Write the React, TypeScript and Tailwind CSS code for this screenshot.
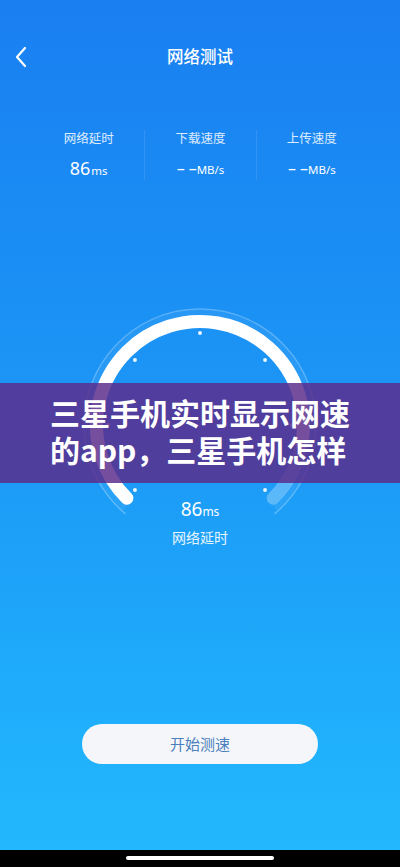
import React from "react";

const CX = 120;
const CY = 120;

function pt(r: number, deg: number) {
  const a = (deg * Math.PI) / 180;
  return [CX + r * Math.sin(a), CY - r * Math.cos(a)];
}

function arc(r: number, from: number, to: number) {
  const [x1, y1] = pt(r, from);
  const [x2, y2] = pt(r, to);
  const large = to - from > 180 ? 1 : 0;
  return `M ${x1.toFixed(2)} ${y1.toFixed(2)} A ${r} ${r} 0 ${large} 1 ${x2.toFixed(2)} ${y2.toFixed(2)}`;
}

function Gauge() {
  const dots = [-135, -90, -45, 0, 45, 90, 135];
  return (
    <svg width="240" height="193" viewBox="0 0 240 193" className="overflow-visible">
      <path d={arc(116, -140, 140)} fill="none" stroke="rgba(255,255,255,0.28)" strokeWidth="1.5" />
      <path d={arc(112, -138, 138)} fill="none" stroke="rgba(255,255,255,0.06)" strokeWidth="6" />
      <path d={arc(103.5, -135, 135)} fill="none" stroke="rgba(255,255,255,0.28)" strokeWidth="13" strokeLinecap="round" />
      <path d={arc(103.5, -135, 100)} fill="none" stroke="#ffffff" strokeWidth="13" strokeLinecap="round" />
      {dots.map((d) => {
        const [x, y] = pt(92, d);
        return <circle key={d} cx={x} cy={y} r="2" fill="rgba(255,255,255,0.9)" />;
      })}
    </svg>
  );
}

export default function App() {
  const font = { fontFamily: '"Noto Sans", "Noto Sans CJK SC", sans-serif' };
  return (
    <div
      className="relative w-[400px] h-[867px] flex flex-col overflow-hidden bg-gradient-to-b from-[#1a7ff1] via-[#1c98f6] to-[#23bafe] text-white"
      style={font}
    >
      {/* header */}
      <div className="pt-[45px] px-[12px] grid grid-cols-[40px_1fr_40px] h-[69px] items-center">
        <svg width="20" height="24" viewBox="0 0 20 24">
          <path d="M13 3 L5 12 L13 21" fill="none" stroke="#fff" strokeWidth="2.2" strokeLinecap="round" strokeLinejoin="round" />
        </svg>
        <div className="text-center text-[16.5px] font-medium leading-[24px]">网络测试</div>
        <div />
      </div>

      {/* stats */}
      <div className="mt-[61px] mx-[33px] grid grid-cols-3">
        <div className="flex flex-col items-center h-[50px]">
          <div className="text-[12.5px] leading-[18px] text-white/85">网络延时</div>
          <div className="mt-[8px] leading-[24px] flex items-baseline">
            <span className="text-[18px]">86</span>
            <span className="text-[11.5px] ml-[1px]">ms</span>
          </div>
        </div>
        <div className="flex flex-col items-center h-[50px] border-l border-white/10">
          <div className="text-[12.5px] leading-[18px] text-white/85">下载速度</div>
          <div className="mt-[8px] leading-[24px] flex items-baseline">
            <span className="text-[16px] tracking-[4px]">– </span>
            <span className="text-[16px]">–</span>
            <span className="text-[11.5px]">MB/s</span>
          </div>
        </div>
        <div className="flex flex-col items-center h-[50px] border-l border-white/10">
          <div className="text-[12.5px] leading-[18px] text-white/85">上传速度</div>
          <div className="mt-[8px] leading-[24px] flex items-baseline">
            <span className="text-[16px] tracking-[4px]">– </span>
            <span className="text-[16px]">–</span>
            <span className="text-[11.5px]">MB/s</span>
          </div>
        </div>
      </div>

      {/* gauge */}
      <div className="mt-[125px] flex flex-col items-center">
        <Gauge />
        <div className="mt-[-1px] leading-[24px] flex items-baseline">
          <span className="text-[19px]">86</span>
          <span className="text-[12px]">ms</span>
        </div>
        <div className="mt-[4px] text-[14px] leading-[20px] text-white/90">网络延时</div>
      </div>

      {/* button */}
      <div className="mt-[176px] flex justify-center">
        <div className="w-[236px] h-[40px] rounded-full bg-[#f4f6f9] flex items-center justify-center text-[15px] text-[#4b7fbd]">
          开始测速
        </div>
      </div>

      {/* bottom bar */}
      <div className="mt-auto h-[17px] bg-black flex justify-center pt-[6px]">
        <div className="w-[148px] h-[3.5px] rounded-full bg-white" />
      </div>

      {/* overlay banner */}
      <div className="absolute left-0 top-[383px] w-full h-[100px] bg-[rgba(90,44,140,0.84)] flex items-center justify-center">
        <div
          className="w-[300px] text-[30px] font-bold leading-[37px] text-white -mt-[4px]"
          style={{ fontFamily: '"Noto Sans CJK SC", "Noto Sans", sans-serif' }}
        >
          <div>三星手机实时显示网速</div>
          <div>的app，三星手机怎样</div>
        </div>
      </div>
    </div>
  );
}
